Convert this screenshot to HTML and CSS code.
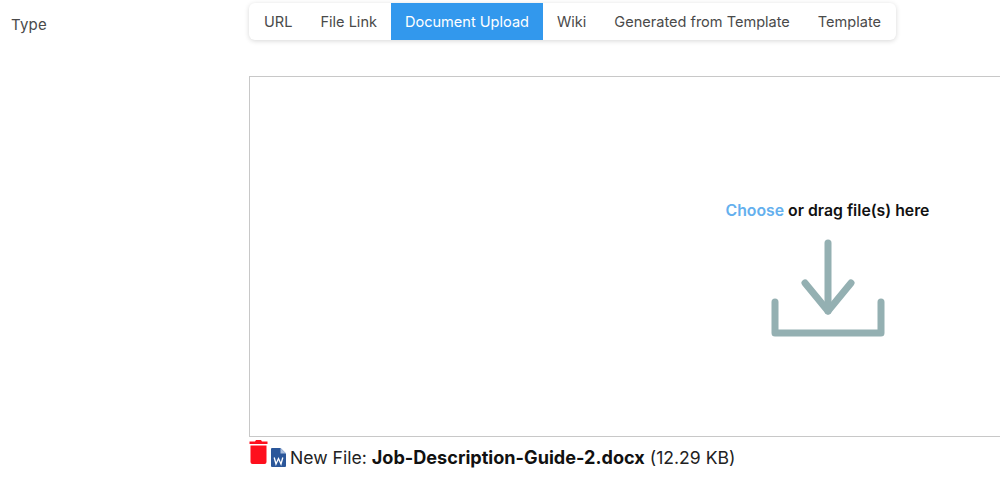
FILE: index.html
```html
<!DOCTYPE html>
<html lang="en">
<head>
<meta charset="utf-8">
<title>Document Upload</title>
<link rel="stylesheet" href="styles.css">
</head>
<body>
<main class="field">
  <div class="label">Type</div>
  <div class="body">
    <ul class="tabs">
      <li class="tab">URL</li>
      <li class="tab">File Link</li>
      <li class="tab active">Document Upload</li>
      <li class="tab">Wiki</li>
      <li class="tab">Generated from Template</li>
      <li class="tab">Template</li>
    </ul>
    <div class="drop">
      <div class="drop-text"><span class="choose">Choose</span> or drag file(s) here</div>
      <svg class="drop-icon" width="126" height="106" viewBox="0 0 126 106" fill="none" stroke="#94b0b2" stroke-width="7" stroke-linecap="round" stroke-linejoin="round" aria-hidden="true">
        <path d="M63 8V76"/>
        <path d="M40 48L63 76L86 48"/>
        <path d="M10 67V98H116V67"/>
      </svg>
    </div>
    <div class="file">
      <svg class="trash" width="19" height="24" viewBox="0 0 19 24" aria-hidden="true">
        <path fill="#fe0f1d" d="M7 0H12L13 1.500H18.500V4H.5V1.500H6ZM1.500 5.500H17.500V22A2 2 0 0 1 15.500 24H3.500A2 2 0 0 1 1.500 22Z"/>
      </svg>
      <svg class="word" width="15" height="19" viewBox="0 0 15 19" aria-hidden="true">
        <path fill="#2b579a" d="M1 0H9.500L15 5.500V18A1 1 0 0 1 14 19H1A1 1 0 0 1 0 18V1A1 1 0 0 1 1 0Z"/>
        <path fill="#a9bfdf" d="M9.500 0L15 5.500H9.500Z"/>
        <path fill="none" stroke="#fff" stroke-width="1.300" d="M3.200 9.500L5 16L7.500 10.500L10 16L11.800 9.500"/>
      </svg>
      <span class="file-text">New File: <strong>Job-Description-Guide-2.docx</strong> (12.29 KB)</span>
    </div>
  </div>
</main>
</body>
</html>
```
FILE: styles.css
```css
html, body {
  margin: 0;
  height: 489px;
  overflow: hidden;
  background: #fff;
}
body {
  font-family: Inter, "Liberation Sans", sans-serif;
  color: #4a4a4a;
}
.field {
  display: flex;
}
.label {
  width: 249px;
  flex: none;
  box-sizing: border-box;
  padding: 16px 0 0 11px;
  font-size: 15px;
  line-height: 18px;
  letter-spacing: 0.2px;
}
.body {
  flex: 1;
  min-width: 0;
  padding-top: 3px;
}
.tabs {
  display: inline-flex;
  list-style: none;
  margin: 0;
  padding: 0 1px;
  height: 37px;
  background: #fff;
  border-radius: 6px;
  box-shadow: 0 1px 5px rgba(0, 0, 0, 0.16);
  overflow: hidden;
  vertical-align: top;
}
.tab {
  padding: 0 14px;
  font-size: 14.55px;
  line-height: 38px;
  white-space: nowrap;
}
.active {
  background: #3298ed;
  color: #fff;
}
.drop {
  box-sizing: border-box;
  height: 361px;
  margin-top: 36px;
  padding: 124px 0 0 405px;
  border: 1px solid #c8c8c8;
  border-right: 0;
  display: flex;
  flex-direction: column;
  align-items: center;
}
.drop-text {
  font-size: 15.8px;
  line-height: 20px;
  font-weight: 600;
  color: #111;
  white-space: nowrap;
}
.choose {
  color: #64b0ee;
}
.drop-icon {
  display: block;
  margin-top: 14px;
}
.file {
  display: flex;
  align-items: flex-start;
  height: 30px;
  padding-top: 3px;
  color: #222;
}
.trash {
  flex: none;
}
.word {
  flex: none;
  margin: 8px 0 0 3px;
}
.file-text {
  margin: 6px 0 0 4px;
  font-size: 17.6px;
  line-height: 22px;
  white-space: nowrap;
}
.file-text strong {
  font-size: 18.1px;
  font-weight: 700;
  color: #111;
}
```
